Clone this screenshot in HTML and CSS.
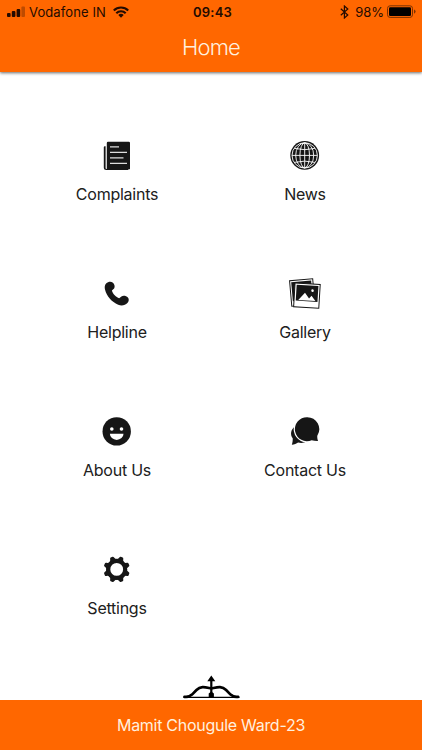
FILE: index.html
```html
<!DOCTYPE html>
<html lang="en">
<head>
<meta charset="utf-8">
<title>Home</title>
<link rel="stylesheet" href="styles.css">
</head>
<body>
<div class="screen">
  <header class="header">
    <div class="status">
      <div class="status-left">
        <svg class="signal" width="18" height="12" viewBox="0 0 18 12"><rect x="0" y="7" width="3.6" height="4" rx="1"/><rect x="4.8" y="5" width="3.6" height="6" rx="1"/><rect x="9.6" y="3" width="3.6" height="8" rx="1"/><rect x="14.4" y="0.5" width="3.6" height="10.5" rx="1" opacity=".3"/></svg>
        <span class="carrier">Vodafone IN</span>
        <svg class="wifi" width="16" height="12" viewBox="0 0 16 12"><g fill="none" stroke="#240b00" stroke-width="2.1"><path d="M.8 4.5a10.2 10.2 0 0 1 14.4 0"/><path d="M3.3 7.2a6.600 6.600 0 0 1 9.400 0"/></g><path d="M5.3 9a3.900 3.900 0 0 1 5.400 0L8 11.800z"/></svg>
      </div>
      <span class="clock">09:43</span>
      <div class="status-right">
        <svg class="bluetooth" width="9" height="14" viewBox="0 0 9 14" fill="none" stroke="#240b00" stroke-width="1.2"><path d="M.8 3.8l7 6.2-3.400 3V1l3.400 3-7 6.200"/></svg>
        <span class="percent">98%</span>
        <svg class="battery" width="29" height="14" viewBox="0 0 29 14"><rect x=".5" y=".8" width="25" height="11.6" rx="2.6" fill="none" stroke="#7d3200"/><rect x="2" y="2.3" width="22" height="8.6" rx="1.2" fill="#000"/><path d="M27 4.5q1.6.6 1.6 2.1T27 8.7z" fill="#7d3200"/></svg>
      </div>
    </div>
    <h1 class="title">Home</h1>
  </header>

  <main class="menu">
    <a class="item">
      <svg class="icon" viewBox="0 0 30 30"><path d="M1.8 6.2q0-1 1-1h.8V27q0 1 1 1H26v1H4.3q-2.5 0-2.5-2.5z"/><rect x="4.8" y=".8" width="23.2" height="27.7" rx="1.2"/><g stroke="#ddd" stroke-width="1.3"><path d="M8 5.8h9M8 11.4h17M8 16.9h13.5M8 22.3h17"/></g></svg>
      <span class="label">Complaints</span>
    </a>
    <a class="item">
      <svg class="icon" viewBox="0 0 30 30"><circle cx="14.7" cy="14.4" r="14.4"/><circle cx="14.7" cy="14.4" r="12.7" fill="none" stroke="#fff" stroke-width=".9"/><g fill="none" stroke="#fff" stroke-width=".9"><path d="M14.7 2v24.8M2 14.4h25.4M4.5 7.4q10.2 2.6 20.4 0M4.5 21.4q10.2-2.600 20.400 0"/><ellipse cx="14.7" cy="14.4" rx="4.8" ry="12.5"/><ellipse cx="14.7" cy="14.4" rx="9" ry="12.5"/></g></svg>
      <span class="label">News</span>
    </a>
    <a class="item">
      <svg class="icon" viewBox="0 0 30 30"><path d="M4.1 4.400C6 2.700 9 2.300 10.600 3.500c2 1.400 2.700 4.300 1.500 6.100L9.900 11.400c.8 3.300 4.300 6.800 7.300 7.800l2.200-1.800c1.800-1.100 4.900-.7 6.500 1.200 1.400 1.700 1 4-.5 5.400-2.100 2.100-5.400 3.300-9.200 1.800C9.600 23.100 4.600 17.100 3 10.600c-.5-2.400-.4-4.900 1.100-6.200z"/></svg>
      <span class="label">Helpline</span>
    </a>
    <a class="item">
      <svg class="icon gallery-icon" viewBox="0 0 32 32"><g transform="rotate(-5 12 13)"><rect x="1.5" y="1.8" width="23.2" height="25.6" fill="#fff" stroke="#161616" stroke-width="1"/><rect x="3" y="3.4" width="20" height="19"/></g><g transform="rotate(3.5 18 18)"><rect x="5.3" y="5.8" width="25.200" height="23.800" fill="#fff" stroke="#161616" stroke-width="1"/><rect x="7" y="7.3" width="21.8" height="16"/><path d="M9.500 22.500l6.300-7.700 4.400 5.500 2.300-2.800 4.200 5z" fill="#fff"/><circle cx="23.2" cy="12.3" r="1.300" fill="#fff"/></g></svg>
      <span class="label">Gallery</span>
    </a>
    <a class="item">
      <svg class="icon" viewBox="0 0 30 30"><circle cx="14.7" cy="14.4" r="14.2"/><g fill="#fff"><circle cx="9.8" cy="12" r="1.8"/><circle cx="19.5" cy="12" r="1.8"/><path d="M7.9 16.700h13.600a6.800 6.200 0 0 1-13.600 0z"/></g></svg>
      <span class="label">About Us</span>
    </a>
    <a class="item">
      <svg class="icon" viewBox="0 0 30 30"><path d="M5.500 9C.3 12.500.1 18 2.700 21.200c.2 2-.2 4.600-.9 6.500 2.600-.1 4.600-.9 6.300-2.100 3.600.9 6.700.2 9-1.500C9.600 23.800 4.300 18 5.500 9z"/><path d="M17 .2A12 12 0 1 0 21.700 23.200c1.800.5 3.900.9 6.400.8-.6-1.400-1-3.600-.8-5.300A12 12 0 0 0 17 .2z" stroke="#fff" stroke-width="2.400" paint-order="stroke"/></svg>
      <span class="label">Contact Us</span>
    </a>
    <a class="item">
      <svg class="icon" viewBox="0 0 30 30"><g transform="translate(14.7 14.4)"><circle r="8.500" fill="none" stroke="#161616" stroke-width="4.200"/><g><path id="tooth" d="M-4.100-9Q-2.500-10-2.100-12Q-1.900-13.200-1-13.200H1Q1.900-13.200 2.100-12Q2.500-10 4.100-9Z" transform="rotate(22.500)"/><use href="#tooth" transform="rotate(45)"/><use href="#tooth" transform="rotate(90)"/><use href="#tooth" transform="rotate(135)"/><use href="#tooth" transform="rotate(180)"/><use href="#tooth" transform="rotate(225)"/><use href="#tooth" transform="rotate(270)"/><use href="#tooth" transform="rotate(315)"/></g></g></svg>
      <span class="label">Settings</span>
    </a>
  </main>

  <svg class="bow" width="58" height="25" viewBox="0 0 58 25"><g fill="none" stroke="#000" stroke-linecap="round"><path d="M1 22.3h55" stroke-width="1.3"/><path d="M1.500 21.800q4.500.6 7.500-2.200l4.500-4.600C18 10.500 23 12.500 28.300 13.500c5.300-1 10.300-3 14.800 1.500l4.500 4.600q3 2.800 7.500 2.200" stroke-width="2.700"/><path d="M28.300 4v17" stroke-width="2.200"/></g><path d="M28.300.5l4 5.700h-8zM25.700 22.500v-4l2.600-2 2.600 2v4z"/></svg>
  <footer class="footer"><span class="ward">Mamit Chougule Ward-23</span></footer>
</div>
</body>
</html>
```
FILE: styles.css
```css
* {
  box-sizing: border-box;
}

body {
  margin: 0;
  background: #fff;
  color: #202020;
  font-family: Inter, "Liberation Sans", sans-serif;
}

.screen {
  display: flex;
  flex-direction: column;
  width: 422px;
  height: 750px;
  overflow: hidden;
}

.header {
  flex: none;
  height: 72px;
  background: #ff6700;
  box-shadow: 0 1px 3px rgba(0, 0, 0, 0.6);
}

.status {
  display: grid;
  grid-template-columns: 1fr auto 1fr;
  align-items: center;
  height: 24px;
  padding: 0 6px 0 7px;
  color: #240b00;
  fill: #240b00;
  font-size: 13px;
  line-height: 24px;
}

.status-left,
.status-right {
  display: flex;
  align-items: center;
}

.status-right {
  justify-content: flex-end;
}

.carrier {
  margin: 0 7px 0 4px;
  letter-spacing: 0.1px;
}

.clock {
  padding-left: 2px;
  font-weight: 600;
  letter-spacing: 0.2px;
}

.bluetooth {
  margin-right: 6px;
}

.percent {
  margin-right: 3px;
}

.title {
  margin: 8px 0 0;
  color: #fff0df;
  font-size: 22px;
  font-weight: 300;
  letter-spacing: -0.8px;
  line-height: 30px;
  text-align: center;
}

.menu {
  display: grid;
  flex: none;
  grid-template-columns: 188px 188px;
  grid-auto-rows: 138px;
  justify-content: center;
  height: 603px;
  padding-top: 69px;
}

.item {
  display: flex;
  flex-direction: column;
  align-items: center;
}

.icon {
  width: 30px;
  height: 30px;
  fill: #161616;
}

.gallery-icon {
  width: 32px;
  height: 32px;
  margin: -1px 0;
}

.label {
  margin-top: 12px;
  font-size: 16px;
  letter-spacing: -0.25px;
  line-height: 23px;
  white-space: nowrap;
}

.bow {
  flex: none;
  align-self: center;
  margin-left: 1px;
}

.footer {
  flex: none;
  height: 50px;
  background: #ff6700;
  color: #fff0df;
  font-size: 16px;
  letter-spacing: -0.28px;
  line-height: 50px;
  text-align: center;
}
```
